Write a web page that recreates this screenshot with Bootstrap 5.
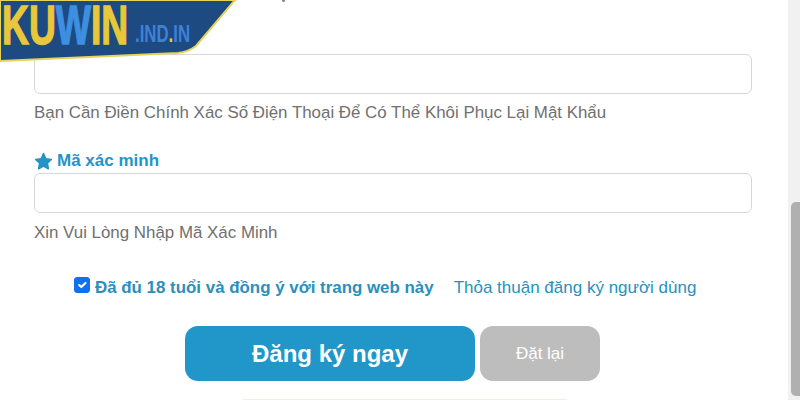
<!DOCTYPE html>
<html lang="vi">
<head>
<meta charset="utf-8">
<title>KUWIN</title>
<link href="https://cdn.jsdelivr.net/npm/bootstrap@5.3.0/dist/css/bootstrap.min.css" rel="stylesheet">
<style>
html,body{margin:0;height:400px;overflow:hidden;background:#fff;font-family:"Liberation Sans",Arial,sans-serif}
.shot{height:400px;width:800px;position:relative;overflow:hidden}
.regform{width:788px;padding:54px 36px 0 34px;height:400px;overflow:hidden}
.field-box.form-control{height:40px;border:1.5px solid #d8d8d8;border-radius:6px;background:#fff;box-shadow:none}
.hint-text{color:#707070;font-size:16.9px;line-height:20px}
.hint-one{margin-top:9px}
.hint-two{margin-top:10px}
.field-label{color:#2494c7;font-size:17px;font-weight:700;line-height:20px;margin:28px 0 2px;gap:4px}
.agree-row{margin-top:34px;padding-left:40px;height:22px}
.agree-check.form-check-input{width:16px;height:16px;margin:0;border-radius:3px;background-color:#1170ee;border-color:#1170ee}
.agree-text{color:#2990bd;font-weight:700;font-size:16.9px;margin:1px 20px 0 5px;line-height:20px}
.agree-link{color:#2990bd;font-size:17px;line-height:20px;text-decoration:none;margin-top:1px}
.action-row{margin-top:27px;padding-left:151px;gap:5px}
.btn-main.btn{width:290px;height:55px;background:#2196c9;border:0;border-radius:13px;color:#fff;font-size:24px;font-weight:700;padding:0}
.btn-reset.btn{width:120px;height:55px;background:#bdbdbd;border:0;border-radius:13px;color:#fff;font-size:17px;padding:0}
.foot-edge{position:absolute;left:243px;top:399px;width:324px;height:1px;background:#f3efdc}
.top-crumb{position:absolute;left:282px;top:0;width:3px;height:2px;background:#888;border-radius:0 0 2px 2px}
.brand-ribbon{position:absolute;left:0;top:0;width:240px;height:64px}
.brand-main{position:absolute;left:2px;top:0;font-size:56px;line-height:50px;font-weight:700;color:#e8c73a;transform:scaleX(.665);transform-origin:0 0;white-space:nowrap;-webkit-text-stroke:1.4px currentColor}
.brand-main i{font-style:normal;color:#3d8fe0}
.brand-sub{position:absolute;left:135px;top:20px;font-size:24px;line-height:28px;font-weight:700;color:#3d82d6;transform:scaleX(.7);transform-origin:0 0;white-space:nowrap}
.brand-sub i{font-style:normal;color:#e8c73a}
.rail{position:absolute;right:0;top:0;width:12px;height:400px;background:#f1f1f1}
.rail-thumb{position:absolute;left:3px;top:202px;width:9px;height:194px;background:#b0b0b0;border-radius:5px 0 0 5px}
</style>
</head>
<body>
<div class="shot">
  <form class="regform">
    <input class="form-control field-box" type="text" aria-label="Số điện thoại">
    <div class="hint-text hint-one">Bạn Cần Điền Chính Xác Số Điện Thoại Để Có Thể Khôi Phục Lại Mật Khẩu</div>
    <label class="field-label d-flex align-items-center">
      <svg width="19" height="18" viewBox="0 0 24 23" aria-hidden="true"><path fill="#2494c7" stroke="#2494c7" stroke-width="2" stroke-linejoin="round" d="M12 2l3 6.6 7 .9-5.1 4.8 1.3 7.1L12 17.9l-6.200 3.500 1.300-7.100L2 9.500l7-.9z"/></svg>
      <span>Mã xác minh</span>
    </label>
    <input class="form-control field-box" type="text" aria-label="Mã xác minh">
    <div class="hint-text hint-two">Xin Vui Lòng Nhập Mã Xác Minh</div>
    <div class="agree-row d-flex align-items-start">
      <input class="form-check-input agree-check" type="checkbox" checked aria-label="Đồng ý">
      <span class="agree-text">Đã đủ 18 tuổi và đồng ý với trang web này</span>
      <a class="agree-link" href="#">Thỏa thuận đăng ký người dùng</a>
    </div>
    <div class="action-row d-flex">
      <button type="button" class="btn btn-main">Đăng ký ngay</button>
      <button type="button" class="btn btn-reset">Đặt lại</button>
    </div>
  </form>
  <div class="foot-edge"></div>
  <div class="top-crumb"></div>
  <svg class="brand-ribbon" viewBox="0 0 240 64" aria-hidden="true"><path d="M0 0H235L196 46Q188 52 178 53L0 61Z" fill="#1e4a82" stroke="#e6d45a" stroke-width="2"/></svg>
  <div class="brand-main">KU<i>W</i>IN</div>
  <div class="brand-sub">.IND<i>.</i>IN</div>
  <div class="rail"><div class="rail-thumb"></div></div>
</div>
<script src="https://cdn.jsdelivr.net/npm/bootstrap@5.3.0/dist/js/bootstrap.bundle.min.js"></script>
</body>
</html>
